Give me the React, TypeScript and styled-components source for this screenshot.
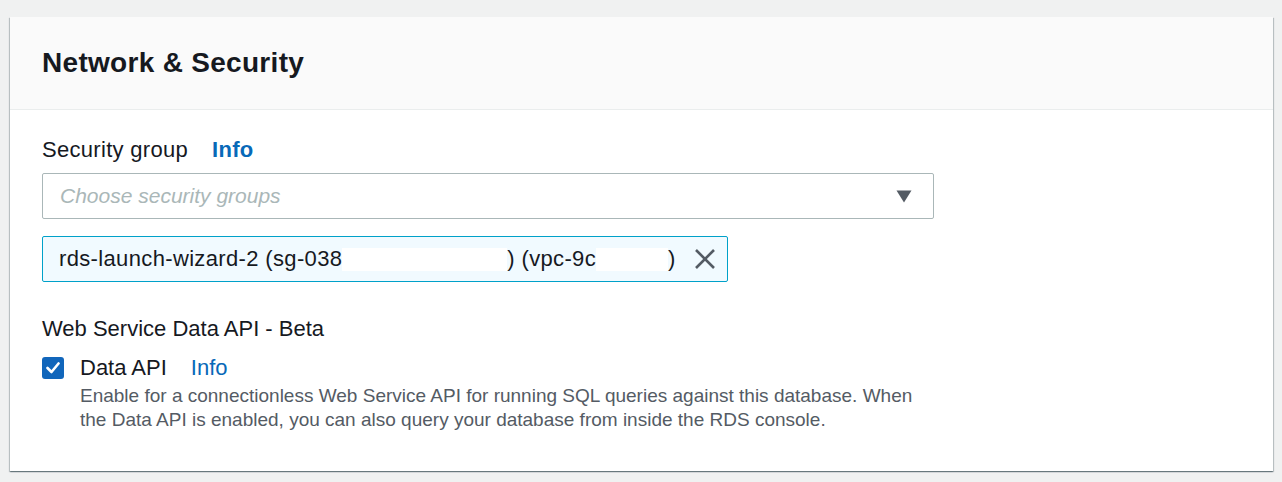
import React from "react";
import styled, { createGlobalStyle } from "styled-components";

const GlobalStyle = createGlobalStyle`
  html, body {
    margin: 0;
    padding: 0;
    background: #f0f1f1;
    font-family: "Liberation Sans", Arial, sans-serif;
    color: #16191f;
  }
  * { box-sizing: border-box; }
`;

const Page = styled.div`
  padding: 17px 9px 12px 10px;
`;

const Card = styled.section`
  background: #ffffff;
  box-shadow: 0 1px 1px 0 rgba(0, 28, 36, 0.35),
    1px 1px 1px 0 rgba(0, 28, 36, 0.18),
    -1px 1px 1px 0 rgba(0, 28, 36, 0.18);
`;

const Header = styled.header`
  background: #fafafa;
  border-bottom: 1px solid #eaeded;
  padding: 29px 32px 29px;
`;

const Title = styled.h2`
  margin: 0;
  font-size: 28px;
  line-height: 34px;
  font-weight: 700;
  letter-spacing: 0.3px;
  color: #16191f;
`;

const Body = styled.div`
  padding: 27px 32px 39px;
`;

const Form = styled.div`
  max-width: 892px;
  display: flex;
  flex-direction: column;
`;

const LabelRow = styled.div<{ $spaced?: boolean }>`
  display: flex;
  align-items: baseline;
  gap: 24px;
  font-size: 22px;
  line-height: 26px;
  letter-spacing: ${(p) => (p.$spaced ? "0.3px" : "0")};
`;

const InfoLink = styled.a<{ $bold?: boolean }>`
  color: #0869b8;
  font-weight: ${(p) => (p.$bold ? 700 : 400)};
  text-decoration: none;
  cursor: pointer;
`;

const Select = styled.div`
  margin-top: 10px;
  height: 46px;
  border: 1px solid #aab7b8;
  border-radius: 2px;
  display: flex;
  align-items: center;
  justify-content: space-between;
  padding: 0 21px 0 17px;
`;

const Placeholder = styled.span`
  font-size: 21px;
  font-style: italic;
  color: #aab7b8;
`;

const Token = styled.div`
  margin-top: 17px;
  align-self: flex-start;
  width: 686px;
  height: 46px;
  border: 1px solid #00a1c9;
  border-radius: 2px;
  background: #f1faff;
  display: flex;
  align-items: center;
  justify-content: space-between;
  padding: 0 11px 0 16px;
`;

const TokenText = styled.span`
  font-size: 22px;
  letter-spacing: 0.35px;
  color: #16191f;
  display: flex;
  align-items: center;
  white-space: nowrap;
`;

const Redacted = styled.span<{ $w: number }>`
  display: inline-block;
  width: ${(p) => p.$w}px;
  height: 23px;
  background: #ffffff;
`;

const SectionLabel = styled.div`
  margin-top: 34px;
  font-size: 22px;
  line-height: 26px;
`;

const CheckRow = styled.div`
  margin-top: 13px;
  display: grid;
  grid-template-columns: 22px 1fr;
  column-gap: 16px;
`;

const Box = styled.span`
  width: 22px;
  height: 22px;
  margin-top: 2px;
  border-radius: 3px;
  background: #1166bb;
  display: flex;
  align-items: center;
  justify-content: center;
`;

const CheckText = styled.div`
  display: flex;
  flex-direction: column;
`;

const Description = styled.p`
  margin: 3px 0 0;
  font-size: 19px;
  line-height: 24px;
  color: #545b64;
`;

export default function App() {
  return (
    <>
      <GlobalStyle />
      <Page>
        <Card>
          <Header>
            <Title>Network &amp; Security</Title>
          </Header>
          <Body>
            <Form>
              <LabelRow $spaced>
                <span>Security group</span>
                <InfoLink $bold>Info</InfoLink>
              </LabelRow>
              <Select>
                <Placeholder>Choose security groups</Placeholder>
                <svg width="16" height="13" viewBox="0 0 16 13">
                  <path d="M0.5 0.5 H15.5 L8 12.5 Z" fill="#545b64" />
                </svg>
              </Select>
              <Token>
                <TokenText>
                  rds-launch-wizard-2 (sg-038
                  <Redacted $w={165} />
                  ) (vpc-9c
                  <Redacted $w={72} />)
                </TokenText>
                <svg width="22" height="22" viewBox="0 0 22 22">
                  <path
                    d="M2 2 L20 20 M20 2 L2 20"
                    stroke="#545b64"
                    strokeWidth="2.6"
                    fill="none"
                  />
                </svg>
              </Token>
              <SectionLabel>Web Service Data API - Beta</SectionLabel>
              <CheckRow>
                <Box>
                  <svg width="14" height="12" viewBox="0 0 14 12">
                    <path
                      d="M1.5 6 L5.5 10 L12.5 1.5"
                      stroke="#ffffff"
                      strokeWidth="2.6"
                      fill="none"
                      strokeLinecap="round"
                      strokeLinejoin="round"
                    />
                  </svg>
                </Box>
                <CheckText>
                  <LabelRow>
                    <span>Data API</span>
                    <InfoLink>Info</InfoLink>
                  </LabelRow>
                  <Description>
                    Enable for a connectionless Web Service API for running SQL
                    queries against this database. When the Data API is enabled,
                    you can also query your database from inside the RDS
                    console.
                  </Description>
                </CheckText>
              </CheckRow>
            </Form>
          </Body>
        </Card>
      </Page>
    </>
  );
}
